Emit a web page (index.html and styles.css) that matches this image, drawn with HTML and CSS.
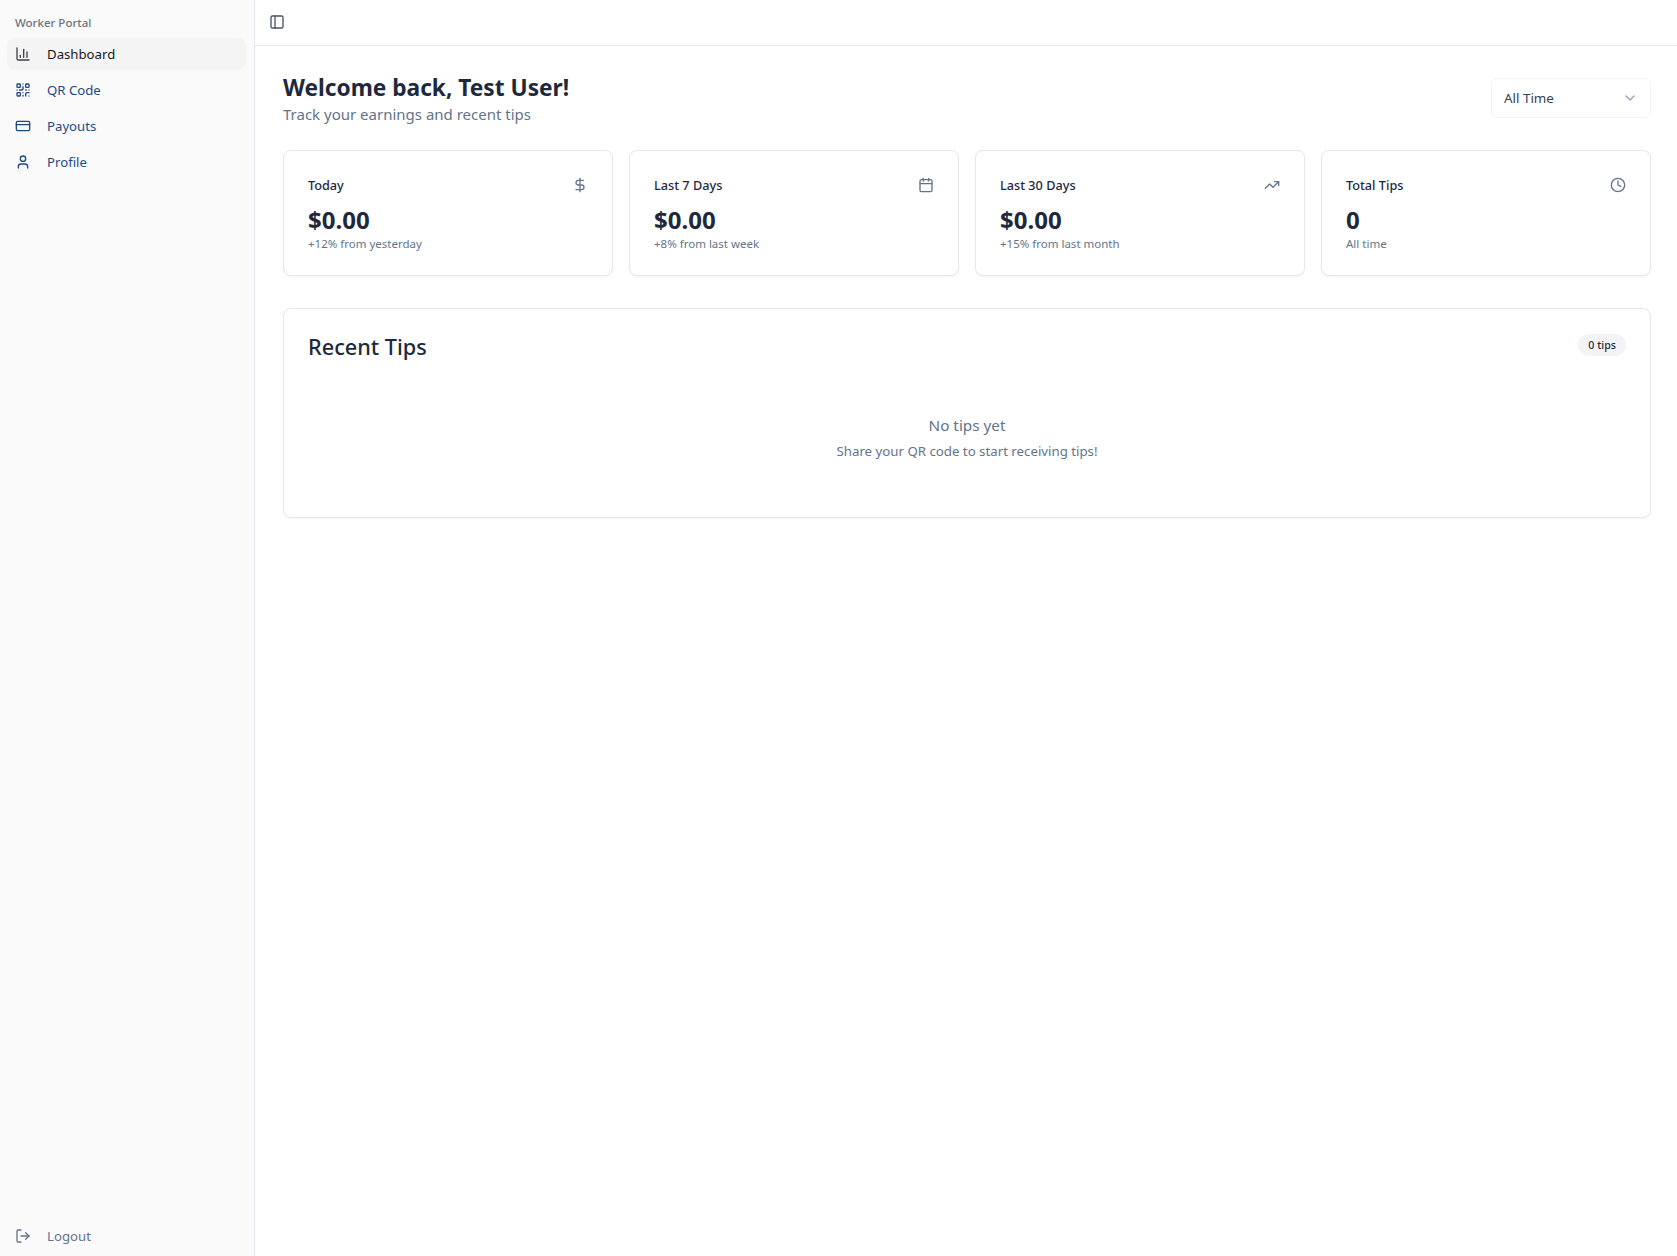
FILE: index.html
```html
<!DOCTYPE html>
<html lang="en">
<head>
<meta charset="utf-8">
<title>Worker Portal</title>
<link rel="stylesheet" href="styles.css">
</head>
<body>
<div class="app">
  <aside class="sidebar">
    <div class="brand">Worker Portal</div>
    <nav class="nav">
      <a class="nav-item active">
        <svg class="nav-icon" viewBox="0 0 24 24"><path d="M3 3v16a2 2 0 0 0 2 2h16"/><path d="M18 17V9"/><path d="M13 17V5"/><path d="M8 17v-3"/></svg>
        <span>Dashboard</span>
      </a>
      <a class="nav-item">
        <svg class="nav-icon" viewBox="0 0 24 24"><rect x="3" y="3" width="5" height="5" rx="1"/><rect x="16" y="3" width="5" height="5" rx="1"/><rect x="3" y="16" width="5" height="5" rx="1"/><path d="M21 16h-3a2 2 0 0 0-2 2v3"/><path d="M21 21v.01"/><path d="M12 7v3a2 2 0 0 1-2 2H7"/><path d="M3 12h.01"/><path d="M12 3h.01"/><path d="M12 16v.01"/><path d="M16 12h1"/><path d="M21 12v.01"/><path d="M12 21v-1"/></svg>
        <span>QR Code</span>
      </a>
      <a class="nav-item">
        <svg class="nav-icon" viewBox="0 0 24 24"><rect x="2" y="5" width="20" height="14" rx="2"/><line x1="2" y1="10" x2="22" y2="10"/></svg>
        <span>Payouts</span>
      </a>
      <a class="nav-item">
        <svg class="nav-icon" viewBox="0 0 24 24"><path d="M19 21v-2a4 4 0 0 0-4-4H9a4 4 0 0 0-4 4v2"/><circle cx="12" cy="7" r="4"/></svg>
        <span>Profile</span>
      </a>
    </nav>
    <a class="nav-item logout">
      <svg class="nav-icon" viewBox="0 0 24 24"><path d="M9 21H5a2 2 0 0 1-2-2V5a2 2 0 0 1 2-2h4"/><polyline points="16 17 21 12 16 7"/><line x1="21" y1="12" x2="9" y2="12"/></svg>
      <span>Logout</span>
    </a>
  </aside>
  <div class="main">
    <header class="topbar">
      <svg class="toggle" viewBox="0 0 24 24"><rect x="3" y="3" width="18" height="18" rx="2"/><path d="M9 3v18"/></svg>
    </header>
    <main class="content">
      <div class="page-head">
        <div class="head-text">
          <h1 class="title">Welcome back, Test User!</h1>
          <p class="subtitle">Track your earnings and recent tips</p>
        </div>
        <div class="select">
          <span>All Time</span>
          <svg class="chevron" viewBox="0 0 24 24"><path d="m6 9 6 6 6-6"/></svg>
        </div>
      </div>
      <section class="stats">
        <div class="card stat">
          <div class="stat-head"><span class="stat-label">Today</span>
            <svg class="stat-icon" viewBox="0 0 24 24"><line x1="12" y1="2" x2="12" y2="22"/><path d="M17 5H9.5a3.5 3.5 0 0 0 0 7h5a3.5 3.5 0 0 1 0 7H6"/></svg></div>
          <div class="stat-value">$0.00</div>
          <div class="stat-note">+12% from yesterday</div>
        </div>
        <div class="card stat">
          <div class="stat-head"><span class="stat-label">Last 7 Days</span>
            <svg class="stat-icon" viewBox="0 0 24 24"><path d="M8 2v4"/><path d="M16 2v4"/><rect x="3" y="4" width="18" height="18" rx="2"/><path d="M3 10h18"/></svg></div>
          <div class="stat-value">$0.00</div>
          <div class="stat-note">+8% from last week</div>
        </div>
        <div class="card stat">
          <div class="stat-head"><span class="stat-label">Last 30 Days</span>
            <svg class="stat-icon" viewBox="0 0 24 24"><polyline points="22 7 13.5 15.5 8.5 10.5 2 17"/><polyline points="16 7 22 7 22 13"/></svg></div>
          <div class="stat-value">$0.00</div>
          <div class="stat-note">+15% from last month</div>
        </div>
        <div class="card stat">
          <div class="stat-head"><span class="stat-label">Total Tips</span>
            <svg class="stat-icon" viewBox="0 0 24 24"><circle cx="12" cy="12" r="10"/><polyline points="12 6 12 12 16 14"/></svg></div>
          <div class="stat-value">0</div>
          <div class="stat-note">All time</div>
        </div>
      </section>
      <section class="card recent">
        <div class="recent-head">
          <h2 class="recent-title">Recent Tips</h2>
          <span class="badge">0 tips</span>
        </div>
        <div class="empty">
          <p class="empty-title">No tips yet</p>
          <p class="empty-text">Share your QR code to start receiving tips!</p>
        </div>
      </section>
    </main>
  </div>
</div>
</body>
</html>
```

FILE: styles.css
```css
* { box-sizing: border-box; }
html, body { margin: 0; height: 100%; }
body {
  font-family: "Noto Sans", "Open Sans", sans-serif;
  color: #1e293b;
  background: #fff;
}
p, h1, h2 { margin: 0; }
svg {
  fill: none;
  stroke: currentColor;
  stroke-width: 2;
  stroke-linecap: round;
  stroke-linejoin: round;
  flex: none;
}
.app { display: flex; height: 1256px; overflow: hidden; }

.sidebar {
  width: 255px;
  flex: none;
  display: flex;
  flex-direction: column;
  background: #fafafa;
  border-right: 1px solid #e5e7eb;
  padding: 8px 8px 8px 7px;
}
.brand {
  height: 30px;
  padding: 0 0 1px 8px;
  display: flex;
  align-items: center;
  font-size: 11.5px;
  font-weight: 500;
  color: #71717a;
}
.nav { display: flex; flex-direction: column; gap: 4px; }
.nav-item {
  height: 32px;
  display: flex;
  align-items: center;
  gap: 16px;
  padding-left: 8px;
  border-radius: 8px;
  font-size: 13.2px;
  color: #1e4a80;
}
.nav-item.active { background: #f4f4f5; color: #18181b; }
.nav-icon { width: 16px; height: 16px; }
.nav-item.active .nav-icon { color: #3f3f46; }
.logout { margin-top: auto; margin-bottom: -4px; color: #64748b; }

.main { flex: 1; min-width: 0; display: flex; flex-direction: column; }
.topbar {
  height: 46px;
  flex: none;
  display: flex;
  align-items: center;
  padding-left: 14px;
  border-bottom: 1px solid #e5e7eb;
}
.toggle { width: 16px; height: 16px; color: #475569; margin-top: -2px; }
.content { padding: 27px 26px 0 28px; }

.page-head {
  display: flex;
  justify-content: space-between;
  align-items: center;
  height: 50px;
}
.head-text { padding-top: 2px; }
.title { font-size: 22.7px; line-height: 30px; font-weight: 700; color: #1e293b; }
.subtitle { font-size: 15px; line-height: 22px; color: #64748b; }
.select {
  width: 160px;
  height: 40px;
  display: flex;
  align-items: center;
  justify-content: space-between;
  padding: 0 12px;
  background: #fff;
  border: 1px solid #f3f4f6;
  border-radius: 6px;
  font-size: 13.4px;
  color: #334155;
}
.chevron { width: 16px; height: 16px; color: #94a3b8; }

.card {
  background: #fff;
  border: 1px solid #e5e7eb;
  border-radius: 8px;
  box-shadow: 0 1px 2px rgba(0, 0, 0, 0.05);
}
.stats {
  display: grid;
  grid-template-columns: repeat(4, 330px);
  gap: 16px;
  margin-top: 27px;
}
.stat { height: 126px; padding: 24px; }
.stat-head {
  display: flex;
  justify-content: space-between;
  align-items: center;
  height: 20px;
}
.stat-label { font-size: 12.7px; font-weight: 500; color: #1e293b; }
.stat-icon { width: 16px; height: 16px; color: #64748b; }
.stat-value {
  margin-top: 9px;
  font-size: 24px;
  line-height: 32px;
  font-weight: 700;
  color: #1e293b;
}
.stat-note { font-size: 11.5px; line-height: 16px; color: #64748b; }

.recent {
  margin-top: 32px;
  height: 210px;
  padding: 24px;
}
.recent-head {
  display: flex;
  justify-content: space-between;
  align-items: flex-start;
}
.recent-title {
  font-size: 21.7px;
  line-height: 28px;
  font-weight: 500;
  color: #1e293b;
}
.badge {
  height: 22px;
  margin-top: 1px;
  padding: 0 10px;
  display: flex;
  align-items: center;
  border-radius: 11px;
  background: #f3f4f6;
  font-size: 10.7px;
  font-weight: 500;
  color: #1e293b;
}
.empty { margin-top: 52px; text-align: center; color: #64748b; }
.empty-title { font-size: 15.3px; line-height: 24px; }
.empty-text { font-size: 13.25px; line-height: 20px; margin-top: 4px; }
```
